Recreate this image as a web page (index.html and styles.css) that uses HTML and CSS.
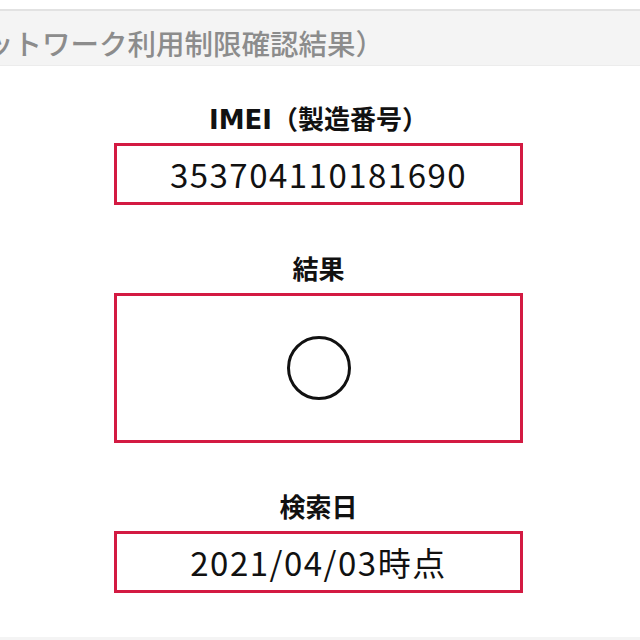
FILE: index.html
```html
<!DOCTYPE html>
<html lang="ja">
<head>
  <meta charset="UTF-8" />
  <meta name="viewport" content="width=device-width, initial-scale=1.0" />
  <title>ネットワーク利用制限確認結果</title>
  <link rel="stylesheet" href="styles.css">
</head>
<body>
  <header class="page-title">
    <h2>（ネットワーク利用制限確認結果）</h2>
  </header>

  <main class="result">
    <section class="field">
      <h3>IMEI（製造番号）</h3>
      <div class="value">353704110181690</div>
    </section>

    <section class="field">
      <h3>結果</h3>
      <div class="value value-large">
        <svg class="mark" width="66" height="66" viewBox="0 0 66 66" aria-label="○">
          <circle cx="33" cy="33" r="30.5" fill="none" stroke="#111" stroke-width="3" />
        </svg>
      </div>
    </section>

    <section class="field">
      <h3>検索日</h3>
      <div class="value">2021/04/03時点</div>
    </section>
  </main>

  <footer class="page-foot"></footer>
</body>
</html>
```

FILE: styles.css
```css
* {
  box-sizing: border-box;
}

body {
  margin: 0;
  background: #fff;
  color: #111;
  font-family: "Noto Sans CJK JP", "Noto Sans", sans-serif;
}

.page-title {
  margin-top: 9px;
  height: 57px;
  overflow: hidden;
  background: #f4f4f4;
  border-top: 2px solid #e2e2e2;
  border-bottom: 1px solid #ececec;
}

.page-title h2 {
  margin: 0 0 0 -72px;
  padding-top: 15px;
  font-size: 28.5px;
  font-weight: 500;
  line-height: 34px;
  white-space: nowrap;
  color: #8c8c8c;
}

.result {
  width: 409px;
  margin: 39px 0 0 114px;
  display: flex;
  flex-direction: column;
  gap: 50px;
}

.field h3 {
  margin: 0 0 8px;
  font-family: "DejaVu Sans", "Noto Sans CJK JP", sans-serif;
  font-size: 26px;
  font-weight: 700;
  line-height: 30px;
  text-align: center;
}

.value {
  height: 62px;
  display: flex;
  align-items: center;
  justify-content: center;
  border: 3px solid #d31a42;
  font-size: 33px;
  letter-spacing: 1.5px;
}

.value-large {
  height: 150px;
}

.page-foot {
  margin-top: 44px;
  height: 10px;
  background: #f4f4f4;
}
```
